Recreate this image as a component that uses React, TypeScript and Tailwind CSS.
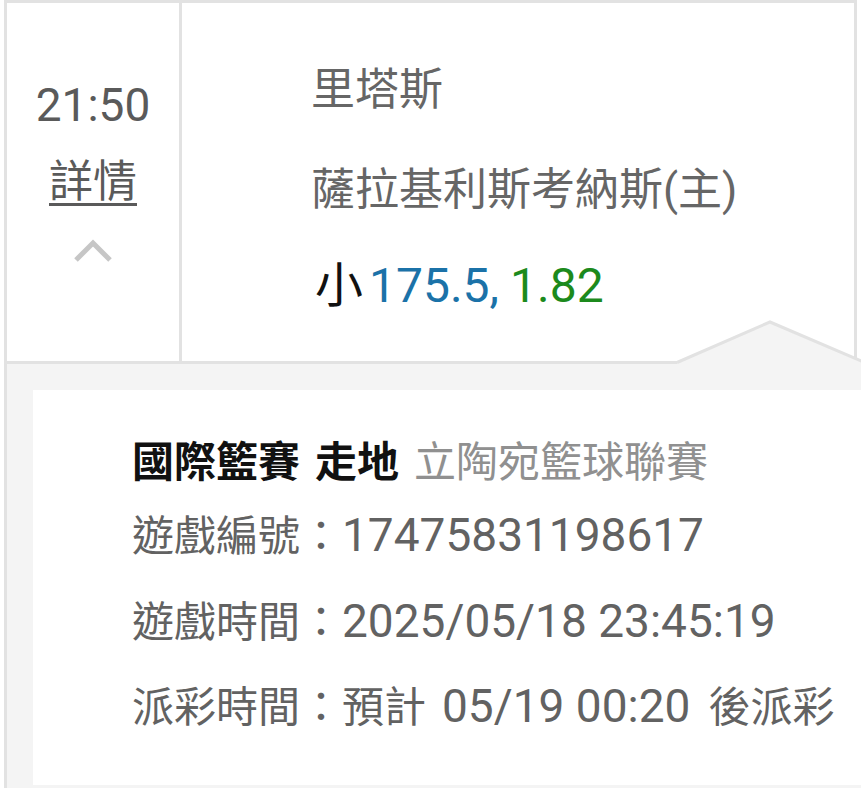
const font = { fontFamily: 'Roboto, "Noto Sans CJK TC", sans-serif' };

function ChevronUp() {
  return (
    <svg width="40" height="25" viewBox="0 0 40 25" fill="none">
      <polyline points="3,22 20,5 37,22" stroke="#c6c6c6" strokeWidth="5" />
    </svg>
  );
}

// pointer of the detail panel, sits on the bottom border of the match row
function Pointer() {
  return (
    <svg
      className="absolute left-[677px] top-[320px]"
      width="188"
      height="46"
      viewBox="0 0 188 46"
      fill="none"
    >
      <polygon points="0,44.5 0,42.5 93,2 188,42.5 188,44.5" fill="#f4f4f4" />
      <polyline points="0,42.5 93,2 188,42.5" stroke="#e2e2e2" strokeWidth="3" strokeLinejoin="miter" />
    </svg>
  );
}

function Cjk({ children }: { children: string }) {
  return <span className="text-[42px]">{children}</span>;
}

export default function App() {
  return (
    <div className="relative min-h-[788px] overflow-hidden bg-white pl-1" style={font}>
      <div className="flex h-[364px] w-[853px] border-[3px] border-[#e2e2e2]">
        <div className="flex w-[175px] flex-col items-center border-r-[3px] border-[#e2e2e2]">
          <div className="mt-[79px] text-[46px] leading-[46px] text-[#5a5a5a]">21:50</div>
          <div className="mt-[32px] text-[44px] leading-[44px] text-[#5a5a5a] underline decoration-[3px] underline-offset-[6px]">
            詳情
          </div>
          <div className="mt-[34px]">
            <ChevronUp />
          </div>
        </div>
        <div className="flex flex-1 flex-col pl-[129px] pt-[65px] text-[44px] leading-[44px]">
          <div className="text-[#666666]">里塔斯</div>
          <div className="mt-[56px] text-[#666666]">薩拉基利斯考納斯(主)</div>
          <div className="mt-[50px] text-[48px] leading-[48px]">
            <span className="ml-[4px] text-[#111111]">小</span>
            <span className="ml-[6px] text-[#1b72a8]">175.5,</span>
            <span className="ml-[11px] text-[#1c8a1c]">1.82</span>
          </div>
        </div>
      </div>
      <div className="border-l-[3px] border-[#e2e2e2] bg-[#f4f4f4] pb-[3px] pl-[26px] pt-[26px]">
        <div className="h-[395px] bg-white pl-[99px] pt-[50px] text-[46px] leading-[46px] text-[#626262]">
          <div className="text-[42px]">
            <span className="font-bold text-[#111111]">國際籃賽</span>
            <span className="ml-[15px] font-bold text-[#111111]">走地</span>
            <span className="ml-[15px] text-[#909090]">立陶宛籃球聯賽</span>
          </div>
          <div className="mt-[26px]">
            <Cjk>遊戲編號：</Cjk>17475831198617
          </div>
          <div className="mt-[38px]">
            <Cjk>遊戲時間：</Cjk>2025/05/18 23:45:19
          </div>
          <div className="mt-[37px]">
            <Cjk>派彩時間：預計</Cjk>
            <span className="ml-[16px]">05/19 00:20</span>
            <span className="ml-[18px] text-[42px]">後派彩</span>
          </div>
        </div>
      </div>
      <Pointer />
    </div>
  );
}
